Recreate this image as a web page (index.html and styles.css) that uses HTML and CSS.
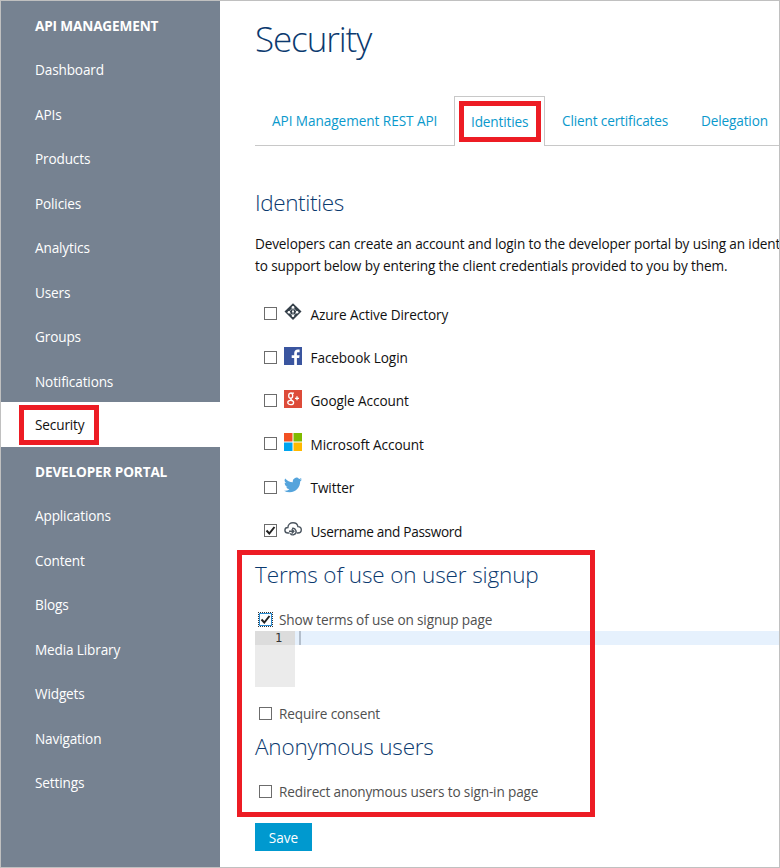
FILE: index.html
```
<!DOCTYPE html>
<html lang="en">
<head>
<meta charset="utf-8">
<title>Security</title>
<link rel="stylesheet" href="styles.css">
</head>
<body>
<div class="frame">
  <nav class="sidebar">
    <h2 class="group">API MANAGEMENT</h2>
    <a class="item">Dashboard</a>
    <a class="item">APIs</a>
    <a class="item">Products</a>
    <a class="item">Policies</a>
    <a class="item">Analytics</a>
    <a class="item">Users</a>
    <a class="item">Groups</a>
    <a class="item">Notifications</a>
    <a class="item active">Security<i class="mark mark-nav"></i></a>
    <h2 class="group second">DEVELOPER PORTAL</h2>
    <a class="item">Applications</a>
    <a class="item">Content</a>
    <a class="item">Blogs</a>
    <a class="item">Media Library</a>
    <a class="item">Widgets</a>
    <a class="item">Navigation</a>
    <a class="item">Settings</a>
  </nav>
  <main class="main">
    <h1 class="title"><span>Security</span></h1>
    <div class="tabs">
      <a class="tab tab-rest"><span>API Management REST API</span></a>
      <a class="tab current"><span>Identities</span><i class="mark mark-tab"></i></a>
      <a class="tab tab-certs"><span>Client certificates</span></a>
      <a class="tab"><span>Delegation</span></a>
    </div>
    <h3 class="heading"><span class="h-ident">Identities</span></h3>
    <p class="intro"><span class="line1">Developers can create an account and login to the developer portal by using an identity</span><br><span class="line2">to support below by entering the client credentials provided to you by them.</span></p>
    <div class="providers">
      <label class="provider"><input type="checkbox">
        <svg class="icon" viewBox="0 0 18 18"><path d="M9 .3 17.500 8.600 9 17 .500 8.600Z" fill="#343f49"/><path d="M9 4.300 4.800 9.300 9 12.800l4.200-3.500ZM9 4v9" fill="none" stroke="#c3c9ce" stroke-width=".8"/><circle cx="9" cy="4.300" r="1.300" fill="#fff"/><circle cx="4.900" cy="9.300" r="1.300" fill="#fff"/><circle cx="13.100" cy="9.300" r="1.300" fill="#fff"/><circle cx="9" cy="12.800" r="1.300" fill="#fff"/><circle cx="9" cy="8.500" r="1" fill="#fff"/></svg>
        <span>Azure Active Directory</span></label>
      <label class="provider"><input type="checkbox">
        <svg class="icon" viewBox="0 0 18 18"><path d="M0 0h18v18H0Z" fill="#3a559f"/><path d="M10.200 18v-7H7.700V8.200h2.500V6.300c0-2.500 1.400-3.800 3.600-3.800.8 0 1.300 0 1.800.1v2.600h-1.300c-1.100 0-1.400.5-1.400 1.400v1.600h2.700l-.4 2.800h-2.300v7Z" fill="#fff"/></svg>
        <span>Facebook Login</span></label>
      <label class="provider"><input type="checkbox">
        <svg class="icon" viewBox="0 0 18 18"><path d="M0 0h18v18H0Z" fill="#dd4b39"/><g fill="none" stroke="#fff" stroke-width="1.300"><ellipse cx="6.700" cy="5.700" rx="2" ry="2.500"/><ellipse cx="6.700" cy="12.500" rx="2.900" ry="2.200"/><path d="M6.500 3.200H10M7.200 8.200c-1.500 1 .2 1.400 1.400 2.600M11 8.300h4M13 6.300v4"/></g></svg>
        <span>Google Account</span></label>
      <label class="provider"><input type="checkbox">
        <svg class="icon" viewBox="0 0 18 18"><path d="M0 0h8.500v8.500H0Z" fill="#f25022"/><path d="M9.500 0H18v8.500H9.500Z" fill="#7fba00"/><path d="M0 9.500h8.500V18H0Z" fill="#00a4ef"/><path d="M9.500 9.500H18V18H9.500Z" fill="#ffb900"/></svg>
        <span>Microsoft Account</span></label>
      <label class="provider"><input type="checkbox">
        <svg class="icon" viewBox="0 0 24 24"><path transform="translate(0 -1.300)" d="M23.950 4.570a10 10 0 0 1-2.820.77 4.960 4.960 0 0 0 2.160-2.720c-.95.560-2 .96-3.130 1.180a4.920 4.920 0 0 0-8.380 4.480C7.690 8.090 4.070 6.130 1.640 3.160a4.920 4.920 0 0 0 1.520 6.570 4.900 4.900 0 0 1-2.230-.61v.06a4.920 4.920 0 0 0 3.950 4.830 5 5 0 0 1-2.210.08 4.940 4.940 0 0 0 4.600 3.420A9.870 9.870 0 0 1 0 19.540a14 14 0 0 0 7.550 2.210c9.050 0 14-7.500 14-13.980 0-.21 0-.42-.02-.63a9.940 9.940 0 0 0 2.460-2.550Z" fill="#55a4dc"/></svg>
        <span>Twitter</span></label>
      <label class="provider"><input type="checkbox" checked>
        <svg class="icon" viewBox="0 0 18 18"><g fill="none" stroke="#4c5660" stroke-width="1.400"><path d="M5.500 13H4C2.200 13 .9 11.800.9 10.200s1.300-2.700 3-2.700C4 4.500 6.300 2.700 9 2.700c2.500 0 4.500 1.500 4.900 3.900 2 .1 3.400 1.400 3.400 3.200S15.900 13 13.900 13h-1"/><path d="M8 8.500a3.200 3.200 0 1 1-1.800 4.800M5 11.200h4.500M7.700 9.200l2.200 2-2.200 2.300"/></g></svg>
        <span>Username and Password</span></label>
    </div>
    <section class="signup">
      <i class="mark mark-signup"></i>
      <h3 class="heading"><span class="h-terms">Terms of use on user signup</span></h3>
      <label class="option opt-show"><input type="checkbox" class="focused" checked><span>Show terms of use on signup page</span></label>
      <div class="editor"><div class="gutter"><div class="num">1</div></div><div class="code"><div class="caret"></div></div></div>
      <label class="option opt-consent"><input type="checkbox"><span>Require consent</span></label>
      <h3 class="heading anon"><span class="h-anon">Anonymous users</span></h3>
      <label class="option opt-redirect"><input type="checkbox"><span>Redirect anonymous users to sign-in page</span></label>
    </section>
    <button class="save">Save</button>
  </main>
</div>
</body>
</html>
```
FILE: styles.css
```
* { box-sizing: border-box; }
body { margin: 0; font: 13.6px/22px "Open Sans", "Noto Sans", sans-serif; letter-spacing: -.14px; color: #111; background: #fff; }
h1, h2, h3, p { margin: 0; font-weight: 400; }
.frame { display: flex; width: 780px; height: 868px; border: 1px solid #c0c0c0; overflow: hidden; }
.sidebar { flex: none; width: 219px; background: #768291; color: #fff; }
.group { height: 45px; padding: 14px 0 0 34px; font-size: 13.6px; font-weight: 700; letter-spacing: -.15px; }
.second { height: 45.500px; }
.item { position: relative; display: block; height: 44.500px; padding: 13px 0 0 34px; }
.item.active { padding-top: 12px; background: #fff; color: #111; }
.mark { position: absolute; border: 5px solid #ed1c24; pointer-events: none; }
.mark-nav { left: 18px; top: 3px; width: 80px; height: 40px; }
.main { flex: none; width: 559px; padding-left: 35px; overflow: hidden; }
.title { height: 95px; padding-top: 12px; font-size: 35px; line-height: 52px; font-weight: 300; letter-spacing: -1.1px; color: #0b3a6f; white-space: nowrap; }
.tabs { display: flex; height: 50px; color: #0a99cc; white-space: nowrap; }
.tab { flex: none; height: 50px; padding: 14px 17px 0; border-bottom: 1px solid #c8c8c8; }
.tab:last-child { flex: 1 0 auto; }
.tab.current { position: relative; width: 91px; padding: 14px 16px 0; border: 1px solid #c8c8c8; border-bottom: 0; }
.mark-tab { left: 4px; top: 4px; width: 82px; height: 41px; }
.tab-rest { width: 199px; letter-spacing: -.06px; }
.tab-certs { width: 139px; }
.heading { height: 34px; font-size: 22.500px; line-height: 34px; font-weight: 300; letter-spacing: -.13px; color: #0b3a6f; white-space: nowrap; }
.h-ident { letter-spacing: -.4px; }
.h-anon { letter-spacing: -.2px; }
.tabs + .heading { margin-top: 40px; }
.intro { margin-top: 13px; white-space: nowrap; }
.line2 { letter-spacing: -.12px; }
.providers { margin-top: 15px; }
.provider { display: flex; height: 43.400px; padding: 0 0 0 9px; align-items: center; }
.provider span { margin: 2px 0 0 8.500px; letter-spacing: -.09px; }
.provider:last-child span { letter-spacing: -.32px; }
.icon { width: 18px; height: 18px; margin: -3px 0 0 7px; }
input { appearance: none; flex: none; width: 13px; height: 13px; margin: 0; border: 1px solid #6c6c6c; background: #fff; }
input:checked { background: #fff url("data:image/svg+xml,%3Csvg xmlns='http://www.w3.org/2000/svg' viewBox='0 0 11 11'%3E%3Cpath d='M1.500 5.500 4.300 8.500 9.500 2' fill='none' stroke='%23222' stroke-width='2'/%3E%3C/svg%3E") center / 11px 11px; }
.focused { border-color: #2a8dd4; outline: 1px dotted #333; }
.signup { position: relative; height: 271px; padding-top: 6px; }
.mark-signup { left: -18px; top: -2px; width: 358px; height: 267px; }
.option { display: flex; align-items: center; padding-left: 4px; height: 22px; color: #505050; }
.option input { margin-top: -1px; }
.option span { margin-left: 7px; }
.opt-show { margin-top: 17px; }
.editor { display: flex; height: 56px; }
.gutter { width: 40px; background: #ebebeb; }
.num { height: 14px; padding-right: 13px; background: #dcdcdc; color: #333; text-align: right; font: 12px/14px "DejaVu Sans Mono", monospace; }
.code { flex: 1; }
.caret { height: 14px; background: linear-gradient(#b4bfcc, #b4bfcc) 4px 0 / 2px 14px no-repeat #e6f1fd; }
.opt-consent { margin-top: 16px; }
.anon { margin-top: 5px; }
.opt-redirect { margin-top: 17px; }
.save { display: block; width: 57px; height: 28px; padding: 2px 0 0; border: 0; background: #0099cf; color: #fff; font: inherit; }
```
